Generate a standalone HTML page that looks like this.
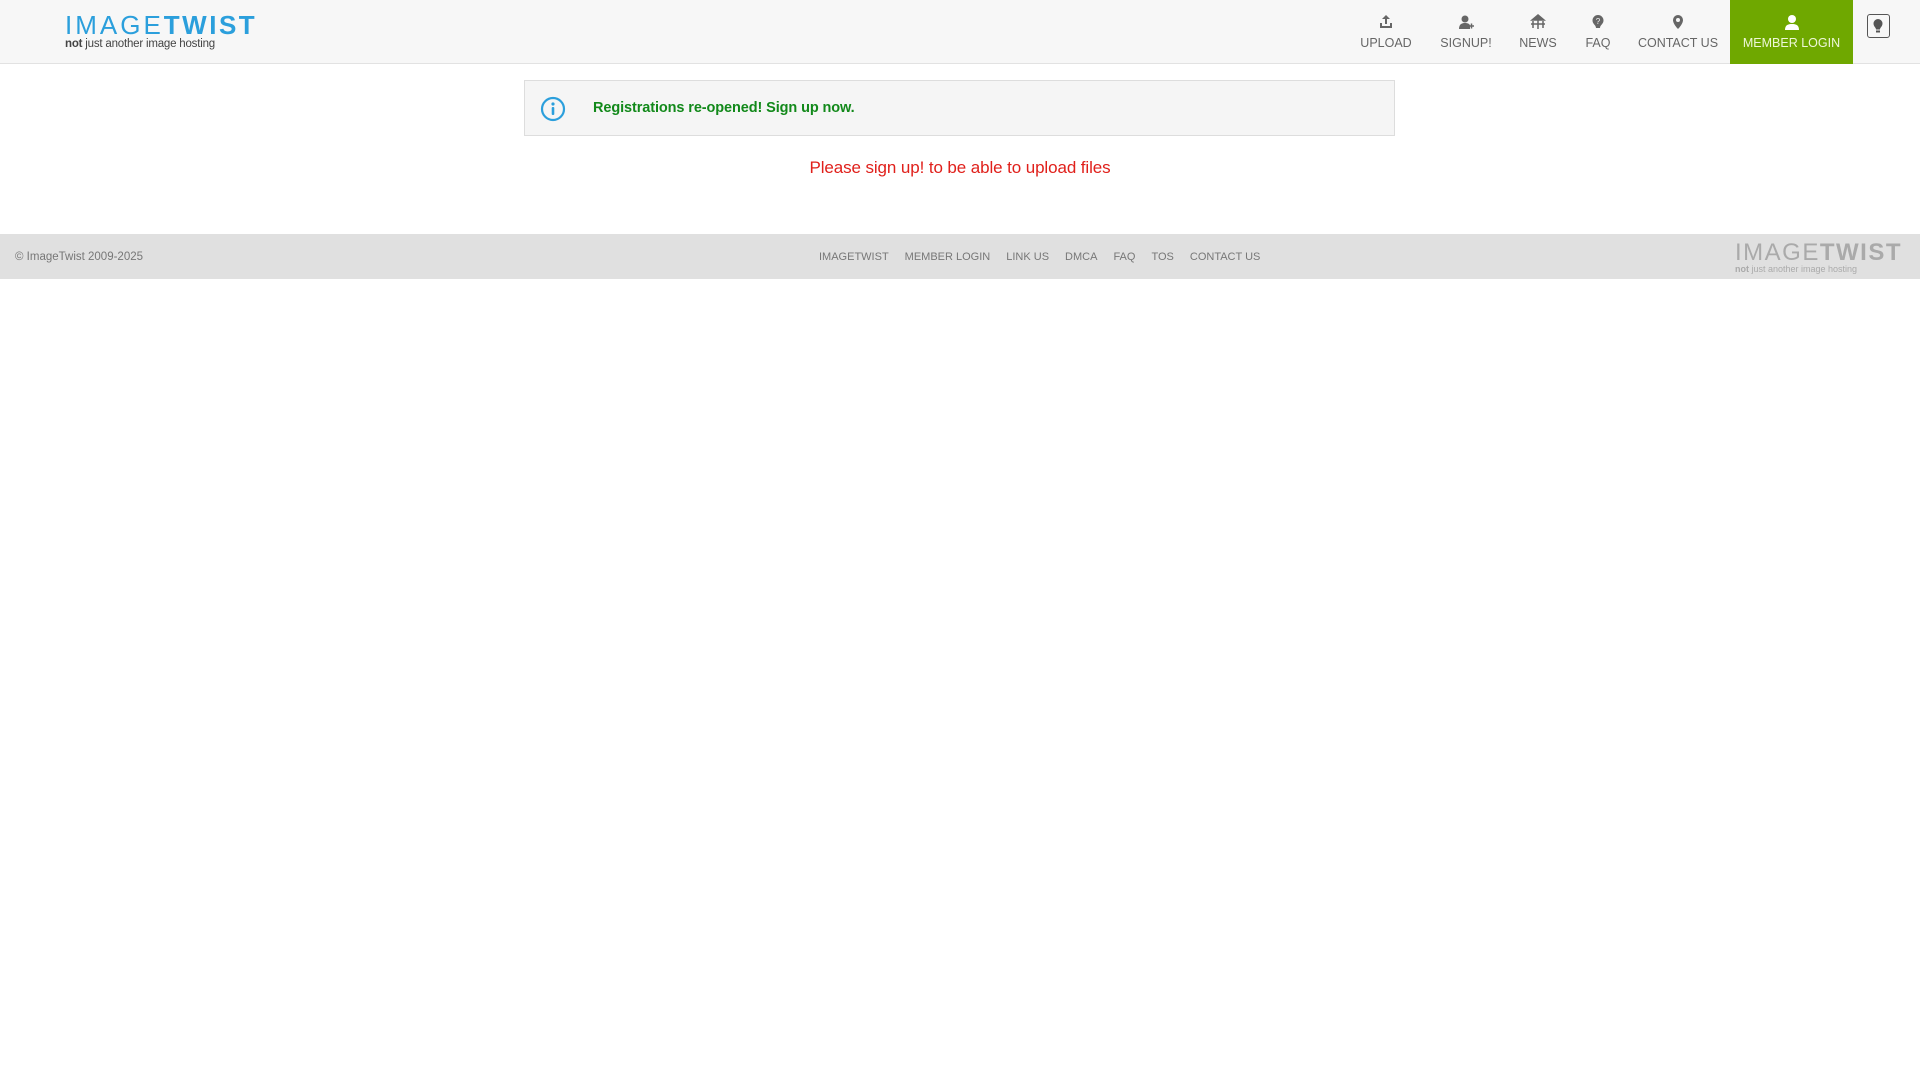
<!DOCTYPE html>
<html><head><meta charset="utf-8"><style>
*{margin:0;padding:0;box-sizing:border-box}
body{width:1920px;height:1080px;background:#fff;font-family:"Liberation Sans",sans-serif;position:relative;overflow:hidden}
.hdr{position:absolute;left:0;top:0;width:1920px;height:64px;background:#f7f7f7;border-bottom:1px solid #e2e2e2}
.logo{position:absolute;left:65px;top:13px}
.logo .a{font-size:26px;color:#2b9fdc;letter-spacing:3px;line-height:24px;font-weight:normal}
.logo .a b{font-weight:900;letter-spacing:2.5px}
.logo .s{font-size:11.5px;color:#444;line-height:12px;margin-top:1px;letter-spacing:-0.2px}
.nav{position:absolute;top:0;height:64px;text-align:center;font-size:12.5px;color:#666}
.nav svg{position:absolute;top:14px;left:50%;margin-left:-8px}
.nav span{position:absolute;top:36px;left:0;width:100%;white-space:nowrap}
.ml{background:#6fa800;color:#eef7d8}
.bulb{position:absolute;left:1867px;top:14px;width:23px;height:24px;border:1.5px solid #555;border-radius:3px}
.info{position:absolute;left:524px;top:80px;width:871px;height:56px;background:#f5f5f5;border:1px solid #ddd}
.info .t{position:absolute;left:68px;top:19px;font-size:14.5px;font-weight:bold;color:#12891a;letter-spacing:-0.1px}
.red{position:absolute;left:0;width:1920px;top:158px;text-align:center;color:#e0201b;font-size:17px;letter-spacing:-0.1px}
.ftr{position:absolute;left:0;top:234px;width:1920px;height:45px;background:#e0e0e0}
.ftr .c{position:absolute;left:15px;top:17px;font-size:11.5px;color:#777}
.ftr .l{position:absolute;left:819px;top:17px;font-size:11px;color:#777;white-space:nowrap}
.ftr .l a{margin-right:16px;color:#777;text-decoration:none}
.fl{position:absolute;left:1735px;top:8px;color:#aaa}
.fl .a{font-size:24px;line-height:22px;letter-spacing:1.5px}
.fl .a b{font-weight:900}
.fl .s{font-size:9px;line-height:10px}
</style></head><body>
<div class="hdr">
<div class="logo"><div class="a">IMAGE<b>TWIST</b></div><div class="s"><b>not</b> just another image hosting</div></div>
<div class="nav" style="left:1350px;width:72px"><svg width="16" height="16" viewBox="0 0 16 16"><path d="M8 1l-4 4h3v5h2V5h3z M2 9v5h12V9h-2v3H4V9z" fill="#666"/></svg><span>UPLOAD</span></div>
<div class="nav" style="left:1430px;width:72px"><svg width="16" height="16" viewBox="0 0 16 16"><circle cx="7" cy="5" r="3.5" fill="#666"/><path d="M1 15c0-5 3-6 6-6s5 1 5 3v3z" fill="#666"/><path d="M11 12h5M13.5 9.5v5" stroke="#666" stroke-width="1.5"/></svg><span>SIGNUP!</span></div>
<div class="nav" style="left:1508px;width:60px"><svg width="16" height="16" viewBox="0 0 16 16"><path d="M8 1l6 5H2z M3 7v7M8 5v10M13 7v7M1 10h14" stroke="#666" stroke-width="1.5" fill="#666"/></svg><span>NEWS</span></div>
<div class="nav" style="left:1573px;width:50px"><svg width="16" height="16" viewBox="0 0 16 16"><path d="M8 1a5.5 5.5 0 0 0-5.5 5.5C2.5 10 6 11 6 14h4c0-3 3.5-4 3.5-7.5A5.5 5.5 0 0 0 8 1z" fill="#666"/><text x="8" y="10" font-size="8" fill="#f7f7f7" text-anchor="middle" font-family="Liberation Sans">?</text></svg><span>FAQ</span></div>
<div class="nav" style="left:1633px;width:90px"><svg width="16" height="16" viewBox="0 0 16 16"><path d="M8 1a5 5 0 0 0-5 5c0 4 5 9 5 9s5-5 5-9a5 5 0 0 0-5-5z" fill="#666"/><circle cx="8" cy="6" r="2" fill="#f7f7f7"/></svg><span>CONTACT US</span></div>
<div class="nav ml" style="left:1730px;width:123px"><svg width="16" height="16" viewBox="0 0 16 16"><circle cx="8" cy="5" r="4" fill="#fff"/><path d="M1 16c0-5 3-6 7-6s7 1 7 6z" fill="#fff"/></svg><span>MEMBER LOGIN</span></div>
<div class="bulb"><svg width="20" height="21" viewBox="0 0 20 21"><path d="M10 4a4.5 4.5 0 0 0-4.5 4.5c0 3 2.5 4 2.5 6h4c0-2 2.5-3 2.5-6A4.5 4.5 0 0 0 10 4z" fill="#555"/><rect x="8" y="15.5" width="4" height="2" fill="#555"/></svg></div>
</div>
<div class="info"><svg style="position:absolute;left:15px;top:15px" width="26" height="26" viewBox="0 0 26 26"><circle cx="13" cy="13" r="11" fill="none" stroke="#2b9fdc" stroke-width="2.2"/><circle cx="13" cy="8" r="1.6" fill="#2b9fdc"/><rect x="11.7" y="11" width="2.6" height="8" rx="1" fill="#2b9fdc"/></svg><div class="t">Registrations re-opened! Sign up now.</div></div>
<div class="red">Please sign up! to be able to upload files</div>
<div class="ftr">
<div class="c">© ImageTwist 2009-2025</div>
<div class="l"><a>IMAGETWIST</a><a>MEMBER LOGIN</a><a>LINK US</a><a>DMCA</a><a>FAQ</a><a>TOS</a><a>CONTACT US</a></div>
<div class="fl"><div class="a">IMAGE<b>TWIST</b></div><div class="s"><b>not</b> just another image hosting</div></div>
</div>
</body></html>
